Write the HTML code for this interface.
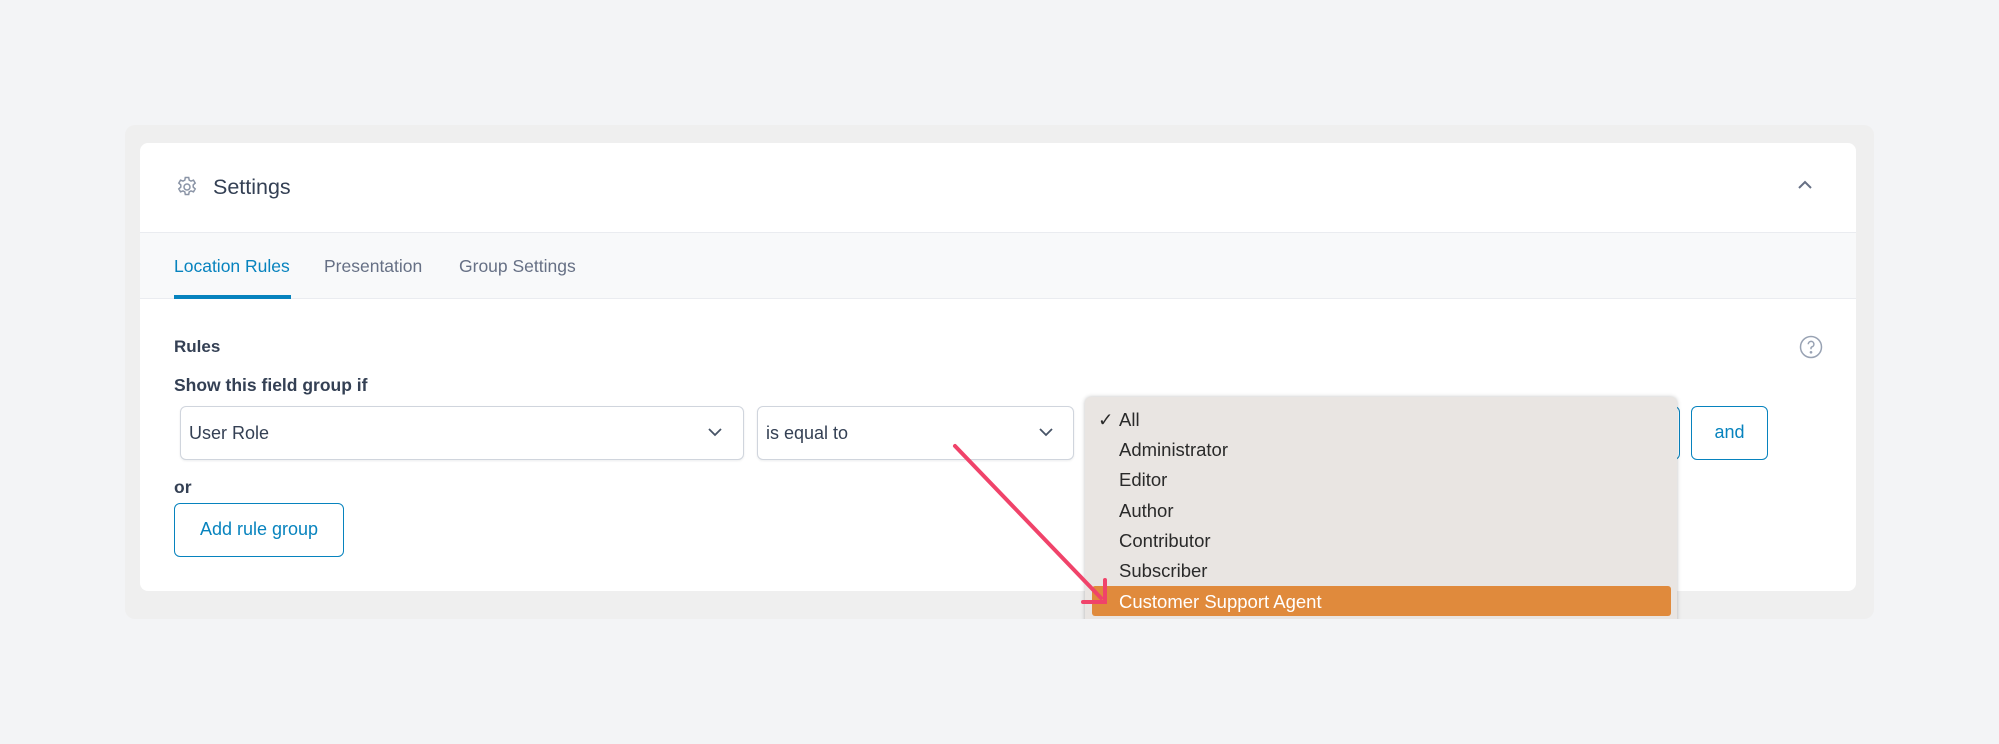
<!DOCTYPE html>
<html><head><meta charset="utf-8"><style>
*{box-sizing:border-box;margin:0;padding:0}
body{width:1999px;height:744px;background:#f3f4f6;font-family:"Liberation Sans",sans-serif;position:relative;overflow:hidden;color:#344054}
.abs{position:absolute}
.outer{left:125px;top:125px;width:1749px;height:494px;background:#efefef;border-radius:10px}
.card{left:140px;top:143px;width:1716px;height:448px;background:#fff;border-radius:8px;overflow:hidden}
.tabs{left:0;top:89px;width:100%;height:67px;background:#f8f9fa;border-top:1px solid #eaecf0;border-bottom:1px solid #eaecf0}
.tab{position:absolute;top:23px;font-size:17.5px;color:#667085}
.sel{top:406px;height:54px;border:1px solid #d0d5dd;border-radius:6px;background:#fff;font-size:18px;color:#344054;padding:16px 0 0 8px;box-shadow:0 1px 2px rgba(16,24,40,.08)}
.btn{border:1.5px solid #0783be;border-radius:6px;color:#0783be;font-size:18px;text-align:center;background:#fff}
.dd{left:1085px;top:397px;width:592px;height:230px;background:#e9e5e2;border-radius:6px;box-shadow:0 0 4px rgba(0,0,0,.25);font-size:18.5px;color:#2a2a2a}
.it{position:absolute;left:34px}
</style></head><body>
<div class="abs outer"></div>
<div class="abs card">
  <svg class="abs" style="left:35px;top:32px" width="24" height="24" viewBox="0 0 24 24" fill="none" stroke="#8a94a6" stroke-width="1.5"><circle cx="12" cy="12" r="3"/><path d="M10.3 2.5h3.4l.5 2.6 1.8 1 2.5-.9 1.7 2.9-2 1.8v2.2l2 1.8-1.7 2.9-2.5-.9-1.8 1-.5 2.6h-3.4l-.5-2.6-1.8-1-2.5.9-1.7-2.9 2-1.8v-2.2l-2-1.8 1.7-2.9 2.5.9 1.8-1z"/></svg>
  <div class="abs" style="left:73px;top:32px;font-size:21.5px;color:#344054">Settings</div>
  <svg class="abs" style="left:1656px;top:36px" width="18" height="12" viewBox="0 0 18 12" fill="none" stroke="#667085" stroke-width="2"><path d="M3 9l6-6 6 6"/></svg>
  <div class="abs tabs">
    <div class="tab" style="left:34px;color:#0783be">Location Rules</div>
    <div class="abs" style="left:34px;top:62px;width:117px;height:4px;background:#0783be"></div>
    <div class="tab" style="left:184px">Presentation</div>
    <div class="tab" style="left:319px">Group Settings</div>
  </div>
  <div class="abs" style="left:34px;top:194px;font-size:17px;font-weight:bold;color:#344054">Rules</div>
  <svg class="abs" style="left:1659px;top:192px" width="24" height="24" viewBox="0 0 24 24" fill="none" stroke="#98a2b3" stroke-width="1.5"><circle cx="12" cy="12" r="10.5"/><path d="M9.3 9.2a2.8 2.8 0 1 1 3.5 2.7c-.6.2-.8.7-.8 1.3v1"/><circle cx="12" cy="17.3" r=".6" fill="#98a2b3"/></svg>
  <div class="abs" style="left:34px;top:232px;font-size:17.5px;font-weight:bold;color:#344054">Show this field group if</div>
  <div class="abs" style="left:34px;top:334px;font-size:17.5px;font-weight:bold;color:#344054">or</div>
  <div class="abs btn" style="left:34px;top:360px;width:170px;height:54px;line-height:51px">Add rule group</div>
</div>
<div class="abs sel" style="left:180px;width:564px">User Role</div>
<svg class="abs" style="left:707px;top:426px" width="16" height="12" viewBox="0 0 16 12" fill="none" stroke="#475467" stroke-width="1.8"><path d="M2 3l6 6 6-6"/></svg>
<div class="abs sel" style="left:757px;width:317px">is equal to</div>
<svg class="abs" style="left:1038px;top:426px" width="16" height="12" viewBox="0 0 16 12" fill="none" stroke="#475467" stroke-width="1.8"><path d="M2 3l6 6 6-6"/></svg>
<div class="abs" style="left:1600px;top:406px;width:80px;height:54px;border:1.5px solid #0783be;border-radius:6px;background:#fff"></div>
<div class="abs btn" style="left:1691px;top:406px;width:77px;height:54px;line-height:51px">and</div>
<div class="abs dd">
  <div class="it" style="left:13px;top:12px">✓</div>
  <div class="it" style="top:12px">All</div>
  <div class="it" style="top:42px">Administrator</div>
  <div class="it" style="top:72px">Editor</div>
  <div class="it" style="top:103px">Author</div>
  <div class="it" style="top:133px">Contributor</div>
  <div class="it" style="top:163px">Subscriber</div>
  <div class="abs" style="left:7px;top:189px;width:579px;height:30px;background:#e08a3c;border-radius:3px"></div>
  <div class="it" style="top:194px;color:#fff">Customer Support Agent</div>
</div>
<div class="abs" style="left:0;top:619px;width:1999px;height:125px;background:#f3f4f6"></div>
<svg class="abs" style="left:0;top:0" width="1999" height="744" fill="none" stroke="#f0436a" stroke-width="4" stroke-linecap="round"><path d="M955 446L1101 598"/><path d="M1105 580V602H1083"/></svg>
</body></html>
